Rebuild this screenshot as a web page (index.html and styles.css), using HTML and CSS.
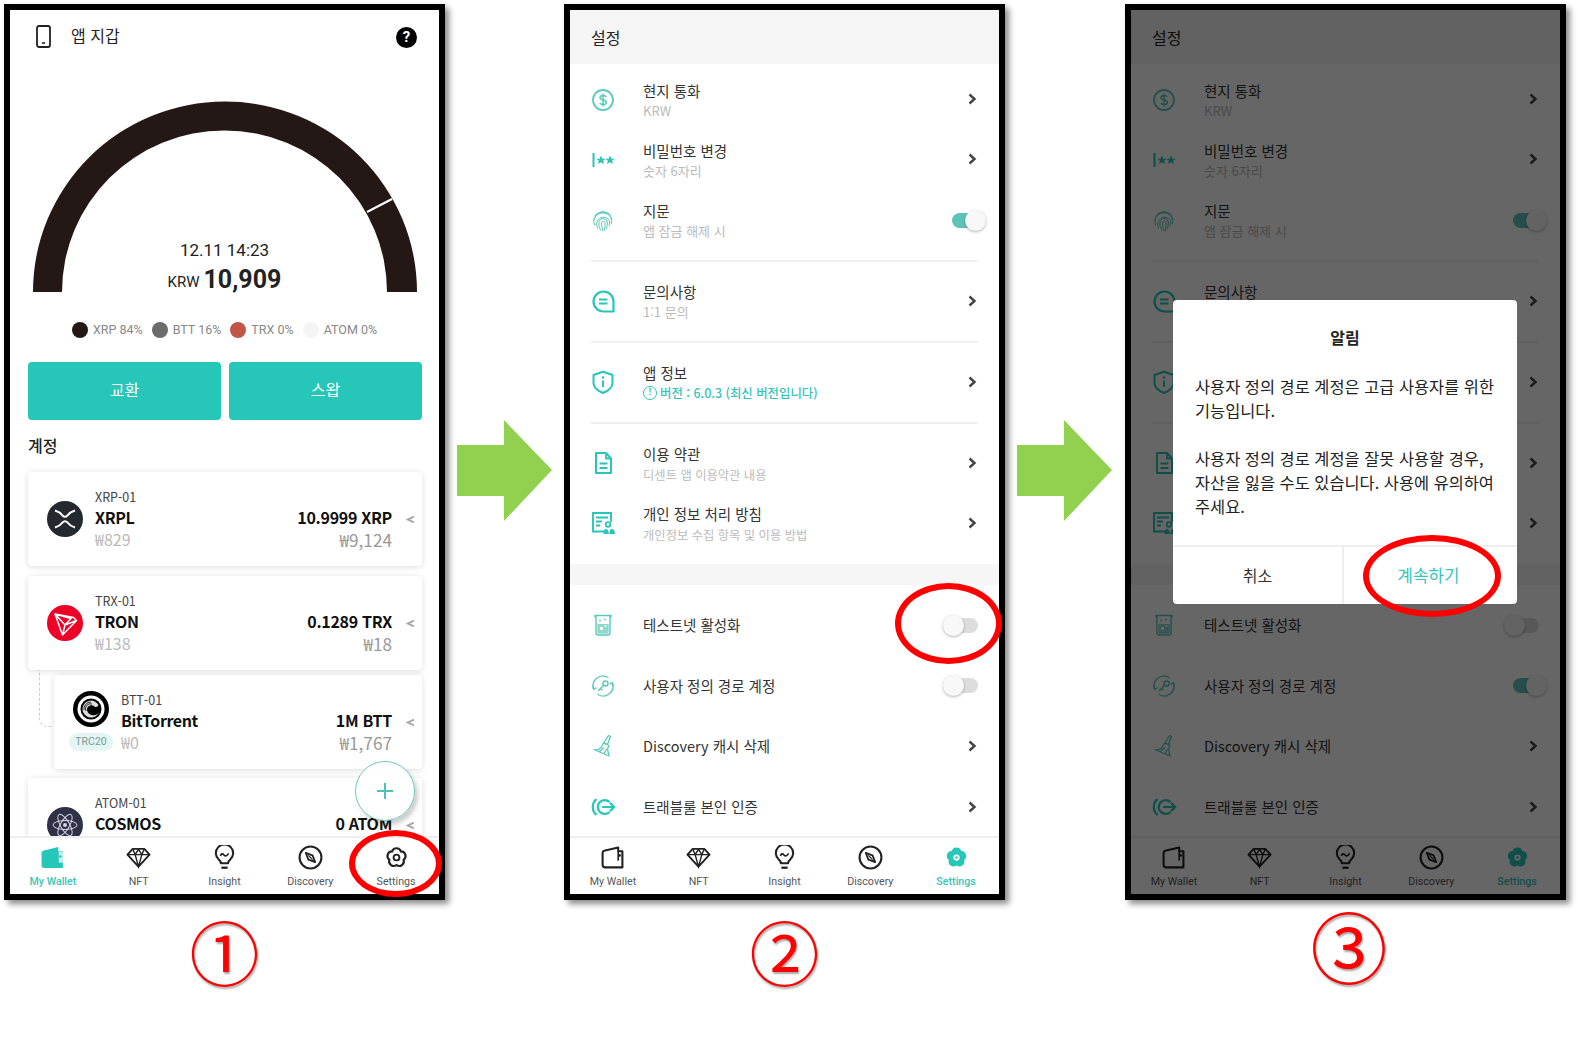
FILE: index.html
```html
<!doctype html>
<html lang="ko">
<head>
<meta charset="utf-8">
<title>앱 지갑 설정</title>
<link rel="stylesheet" href="styles.css">
</head>
<body>

<svg class="defs">
	<symbol id="i-phone" viewBox="0 0 15 23"><rect x="1" y="1" width="13" height="21" rx="2" fill="none" stroke="currentColor" stroke-width="1.8"/><path d="M6 18h3" stroke="currentColor" stroke-width="1.6"/></symbol>
	<symbol id="i-wallet" viewBox="0 0 24 24"><path d="M2.5 7.5Q2.5 6 4 5.600L17.500 2.500V6H21.500V21.500H5Q2.500 21.500 2.500 19Z" fill="none" stroke="currentColor" stroke-width="2" stroke-linejoin="round"/><path d="M17.500 6V15" stroke="currentColor" stroke-width="1.600"/><circle cx="18.800" cy="10" r="1.300" fill="currentColor"/></symbol>
	<symbol id="i-wallet-on" viewBox="0 0 24 24"><path d="M1.500 7.500Q1.500 6 3 5.600L17.500 2V6H22V22H4Q1.500 22 1.500 19.500Z" fill="currentColor"/><path d="M18 6.500H22V17H18Z" fill="#fff" opacity=".75"/><circle cx="19.500" cy="11" r="1.200" fill="currentColor"/></symbol>
	<symbol id="i-gem" viewBox="0 0 26 22"><path d="M7 2H19L24.500 8L13 20.500L1.500 8Z" fill="none" stroke="currentColor" stroke-width="2" stroke-linejoin="round"/><path d="M1.500 8H24.500M7 2L9.500 8L13 20.500L16.500 8L19 2M9.500 8L13 2.500L16.500 8" fill="none" stroke="currentColor" stroke-width="1.500"/></symbol>
	<symbol id="i-bulb" viewBox="0 0 24 24"><path d="M8.500 17.500Q8.500 15.500 6.500 14A8.300 8.300 0 1 1 17.500 14Q15.500 15.500 15.500 17.500Z" fill="none" stroke="currentColor" stroke-width="2" stroke-linejoin="round"/><path d="M9 21.800H15" stroke="currentColor" stroke-width="2.200"/><path d="M8 10.500Q9.500 7 11.500 9.500T16 8" fill="none" stroke="currentColor" stroke-width="1.600"/></symbol>
	<symbol id="i-compass" viewBox="0 0 24 24"><circle cx="12" cy="12" r="10.500" fill="none" stroke="currentColor" stroke-width="2"/><path d="M7.500 7.500L14 10L16.500 16.500L10 14Z" fill="none" stroke="currentColor" stroke-width="1.700" stroke-linejoin="round"/><path d="M10 10L14 14" stroke="currentColor" stroke-width="1.200"/></symbol>
	<symbol id="i-gear" viewBox="0 0 24 24"><path d="M8.470 7.150A3.700 3.700 0 0 1 15.530 7.150A3.700 3.700 0 0 1 17.710 13.850A3.700 3.700 0 0 1 12 18A3.700 3.700 0 0 1 6.290 13.850A3.700 3.700 0 0 1 8.470 7.150Z" fill="none" stroke="currentColor" stroke-width="1.700" transform="translate(12 12) scale(1.200) translate(-12 -12)"/><circle cx="12" cy="12" r="2.800" fill="none" stroke="currentColor" stroke-width="1.800"/></symbol>
	<symbol id="i-gear-on" viewBox="0 0 24 24"><path d="M8.470 7.150A3.700 3.700 0 0 1 15.530 7.150A3.700 3.700 0 0 1 17.710 13.850A3.700 3.700 0 0 1 12 18A3.700 3.700 0 0 1 6.290 13.850A3.700 3.700 0 0 1 8.470 7.150Z" fill="currentColor" transform="translate(12 12) scale(1.280) translate(-12 -12)"/><circle cx="12" cy="12" r="3" fill="#fff"/><circle cx="12" cy="12" r="1.200" fill="currentColor"/></symbol>
	<symbol id="i-dollar" viewBox="0 0 24 24"><circle cx="12" cy="12" r="10" fill="none" stroke="currentColor" stroke-width="1.800"/><path d="M15.300 9C14.500 7 9 6.800 9 9.600C9 12.800 15.400 11.400 15.400 14.500C15.400 17.300 9.700 17.200 8.800 15M12 5.500V18.500" fill="none" stroke="currentColor" stroke-width="1.500"/></symbol>
	<symbol id="i-stars" viewBox="0 0 24 24"><rect x="1.500" y="5" width="2" height="14" fill="currentColor"/><path d="M10 7.500L11.400 10.700H14.700L12.100 12.800L13 16L10 14.200L7 16L7.900 12.800L5.300 10.700H8.600Z" fill="currentColor"/><path d="M19 7.500L20.400 10.700H23.700L21.100 12.800L22 16L19 14.200L16 16L16.900 12.800L14.300 10.700H17.600Z" fill="currentColor"/></symbol>
	<symbol id="i-finger" viewBox="0 0 24 24"><g fill="none" stroke="currentColor" stroke-width="1" stroke-linecap="round"><path d="M4 6.500A10 10 0 0 1 20 6.500"/><path d="M2.800 11A9.500 9.500 0 0 1 21 10.500"/><path d="M3.500 16A8.800 8.800 0 0 1 19.800 8.500Q21 11 20.500 14.500"/><path d="M6.500 19A6.800 6.800 0 0 1 18.500 11.500Q18.800 14 18.200 16.500"/><path d="M9.500 21Q7 17 8 12.500A4.300 4.300 0 0 1 16.300 13Q16.500 16.500 15.500 19.500"/><path d="M12 22Q10 17 10.500 13.500A1.800 1.800 0 0 1 14 14Q14.200 17.500 13.500 21.500"/></g></symbol>
	<symbol id="i-chat" viewBox="0 0 24 24"><path d="M12.500 2.500A10 10 0 1 0 12.500 22.500H22.500V12.500A10 10 0 0 0 12.500 2.500Z" fill="none" stroke="currentColor" stroke-width="2.200" stroke-linejoin="round"/><path d="M8 10.500H16.500M8 14.500H16.500" stroke="currentColor" stroke-width="2"/></symbol>
	<symbol id="i-shield" viewBox="0 0 24 24"><path d="M12 1.800L21.500 5V13Q21.500 19 12 23Q2.500 19 2.500 13V5Z" fill="none" stroke="currentColor" stroke-width="2" stroke-linejoin="round"/><path d="M12 10.500V17" stroke="currentColor" stroke-width="2"/><circle cx="12" cy="7.500" r="1.200" fill="currentColor"/></symbol>
	<symbol id="i-doc" viewBox="0 0 24 24"><path d="M5 2H15L20 7.500V22H5Z" fill="none" stroke="currentColor" stroke-width="2" stroke-linejoin="round"/><path d="M15 2V7.500H20M8.500 12.500H16.500M8.500 17H16.500" fill="none" stroke="currentColor" stroke-width="1.800"/></symbol>
	<symbol id="i-privacy" viewBox="0 0 24 24"><path d="M13 20.500H2V2H20V11" fill="none" stroke="currentColor" stroke-width="1.900"/><path d="M5 6.500H17M5 10.500H11M5 14.500H9" stroke="currentColor" stroke-width="1.900"/><circle cx="17" cy="13.500" r="2.300" fill="none" stroke="currentColor" stroke-width="1.700"/><path d="M12.500 23Q12.500 18 15 18T17.800 23ZM18.300 23Q18.300 18 21 18T24 23Z" fill="currentColor"/></symbol>
	<symbol id="i-beaker" viewBox="0 0 24 24"><path d="M4 2.500H20V3.800H19V20Q19 22 17 22H7Q5 22 5 20V3.800H4Z" fill="none" stroke="currentColor" stroke-width="1.400"/><path d="M6.300 11H17.700V19.500Q17.700 20.700 16.500 20.700H7.500Q6.300 20.700 6.300 19.500Z" fill="currentColor" opacity=".7"/><rect x="9" y="14" width="3" height="3" fill="#fff"/><circle cx="14.500" cy="13" r="1" fill="#fff"/><circle cx="9" cy="7.500" r=".9" fill="currentColor"/><circle cx="14" cy="6.500" r=".9" fill="currentColor"/></symbol>
	<symbol id="i-keyturn" viewBox="0 0 24 24"><g fill="none" stroke="currentColor" stroke-width="1.400" stroke-linecap="round"><path d="M2.600 15A9.800 9.800 0 0 1 17 3.500"/><path d="M21.400 9A9.800 9.800 0 0 1 7 20.500"/><path d="M2 12.500L2.700 15.200L5 14M22 11.500L21.300 8.800L19 10"/><circle cx="14.500" cy="9.500" r="2.500"/><path d="M12.700 11.300L7.500 16.500M9.500 14.500L11 16"/></g></symbol>
	<symbol id="i-broom" viewBox="0 0 24 24"><g fill="none" stroke="currentColor" stroke-width="1.300" stroke-linejoin="round"><path d="M17.500 1.500L19.500 2.500L16.500 10.500L13 9Z"/><path d="M12.500 9L18 11.500L16.500 15L18 22L3 15.500Q7 17 10 13.500Z"/><path d="M8 18L13 13.500M13 20L15.500 15"/></g></symbol>
	<symbol id="i-exit" viewBox="0 0 28 20"><g fill="none" stroke="currentColor" stroke-width="2.400"><path d="M7 1.500A11 11 0 0 0 7 18.500"/><path d="M21 4.500A7.500 7.500 0 1 0 21 15.500"/><path d="M13 10H26M21.500 5.500L26 10L21.500 14.500"/></g></symbol>
	<symbol id="i-chev" viewBox="0 0 10 12"><path d="M2.500 1.500L7.500 6L2.500 10.500" fill="none" stroke="currentColor" stroke-width="2.400"/></symbol>
	<symbol id="i-back" viewBox="0 0 8 8"><path d="M7 1.500L1.500 4L7 6.500" fill="none" stroke="currentColor" stroke-width="1.800"/></symbol>
</svg>

<div class="board">

	<section class="step">
		<div class="phone">
			<div class="screen">
				<header class="wallet-head">
					<svg class="head-icon"><use href="#i-phone"/></svg>
					<span class="head-title">앱 지갑</span>
					<span class="help">?</span>
				</header>
				<div class="wallet-body">
					<div class="gauge">
						<svg class="gauge-arc" viewBox="0 0 429 240">
							<path d="M23 230A192 190.500 0 0 1 407 230H377A162.500 161.500 0 0 0 52 230Z" fill="#231815"/>
							<path d="M357 150L382 137" stroke="#fff" stroke-width="2"/>
						</svg>
						<div class="gauge-text">
							<div class="gauge-time">12.11 14:23</div>
							<div class="gauge-sum"><span class="gauge-cur">KRW</span> <b>10,909</b></div>
						</div>
					</div>
					<div class="legend">
						<span class="legend-item"><i class="dot dot-xrp"></i>XRP 84%</span>
						<span class="legend-item"><i class="dot dot-btt"></i>BTT 16%</span>
						<span class="legend-item"><i class="dot dot-trx"></i>TRX 0%</span>
						<span class="legend-item"><i class="dot dot-atom"></i>ATOM 0%</span>
					</div>
					<div class="actions">
						<button class="action">교환</button>
						<button class="action">스왑</button>
					</div>
					<h2 class="accounts-title">계정</h2>

					<div class="card">
						<div class="coin-col">
							<svg class="coin" viewBox="0 0 36 36"><circle cx="18" cy="18" r="18" fill="#23292f"/><path d="M8 9.500Q13 11 15.500 14.500Q18 17 20.500 14.500Q23 11 28 9.500M8 26.500Q13 25 15.500 21.500Q18 19 20.500 21.500Q23 25 28 26.500" fill="none" stroke="#fff" stroke-width="2"/></svg>
						</div>
						<div class="card-main"><div class="card-id">XRP-01</div><div class="card-name">XRPL</div><div class="card-rate">₩829</div></div>
						<div class="card-side"><div class="card-amount">10.9999 XRP</div><div class="card-value">₩9,124</div></div>
						<svg class="card-back"><use href="#i-back"/></svg>
					</div>

					<div class="card">
						<div class="coin-col">
							<svg class="coin" viewBox="0 0 36 36"><circle cx="18" cy="18" r="18" fill="#ef0027"/><path d="M8 9L26.500 12.500L29.500 15.500L15.500 30ZM8 9L18 20L15.500 30M8 9L24 13.500L18 20L29.500 15.500" fill="none" stroke="#fff" stroke-width="1.500" stroke-linejoin="round"/></svg>
						</div>
						<div class="card-main"><div class="card-id">TRX-01</div><div class="card-name">TRON</div><div class="card-rate">₩138</div></div>
						<div class="card-side"><div class="card-amount">0.1289 TRX</div><div class="card-value">₩18</div></div>
						<svg class="card-back"><use href="#i-back"/></svg>
					</div>

					<div class="card card-sub">
						<span class="card-link"></span>
						<div class="coin-col">
							<svg class="coin" viewBox="0 0 36 36"><circle cx="18" cy="18" r="18" fill="#000"/><circle cx="18" cy="18" r="13.500" fill="#fff"/><circle cx="18" cy="18" r="10.500" fill="#000"/><path d="M25.500 14A8.500 8.500 0 1 0 26 21A6.500 6.500 0 0 1 14 19A4.500 4.500 0 0 1 22 16A3 3 0 0 0 25.500 14Z" fill="#ddd"/><path d="M11 19A7 7 0 0 1 18 11" fill="none" stroke="#000" stroke-width=".8"/><path d="M13 20A5 5 0 0 1 19 13" fill="none" stroke="#000" stroke-width=".8"/></svg>
							<span class="pill">TRC20</span>
						</div>
						<div class="card-main"><div class="card-id">BTT-01</div><div class="card-name">BitTorrent</div><div class="card-rate">₩0</div></div>
						<div class="card-side"><div class="card-amount">1M BTT</div><div class="card-value">₩1,767</div></div>
						<svg class="card-back"><use href="#i-back"/></svg>
					</div>

					<div class="card card-after">
						<div class="coin-col">
							<svg class="coin" viewBox="0 0 36 36"><circle cx="18" cy="18" r="18" fill="#2e3148"/><g fill="none" stroke="#d5d6e2" stroke-width="1"><ellipse cx="18" cy="18" rx="12" ry="4.500"/><ellipse cx="18" cy="18" rx="12" ry="4.500" transform="rotate(60 18 18)"/><ellipse cx="18" cy="18" rx="12" ry="4.500" transform="rotate(120 18 18)"/></g><circle cx="18" cy="18" r="2" fill="#d5d6e2"/></svg>
						</div>
						<div class="card-main"><div class="card-id">ATOM-01</div><div class="card-name">COSMOS</div></div>
						<div class="card-side"><div class="card-amount">0 ATOM</div></div>
						<svg class="card-back"><use href="#i-back"/></svg>
					</div>
				</div>
				<span class="fab"></span>
				<nav class="tabs">
					<a class="tab tab-on"><svg class="tab-icon"><use href="#i-wallet-on"/></svg>My Wallet</a>
					<a class="tab"><svg class="tab-icon"><use href="#i-gem"/></svg>NFT</a>
					<a class="tab"><svg class="tab-icon"><use href="#i-bulb"/></svg>Insight</a>
					<a class="tab"><svg class="tab-icon"><use href="#i-compass"/></svg>Discovery</a>
					<a class="tab"><svg class="tab-icon"><use href="#i-gear"/></svg>Settings</a>
				</nav>
			</div>
			<span class="ring ring-one"></span>
		</div>
		<div class="num">①</div>
	</section>

	<div class="arrow-col"><span class="arrow"></span></div>

	<section class="step">
		<div class="phone">
			<div class="screen">
				<header class="set-head">설정</header>
				<div class="set-body">
					<div class="group group-a">
						<div class="row"><svg class="row-icon soft"><use href="#i-dollar"/></svg><div class="row-text"><div class="row-title">현지 통화</div><div class="row-sub">KRW</div></div><svg class="chev"><use href="#i-chev"/></svg></div>
						<div class="row"><svg class="row-icon"><use href="#i-stars"/></svg><div class="row-text"><div class="row-title">비밀번호 변경</div><div class="row-sub">숫자 6자리</div></div><svg class="chev"><use href="#i-chev"/></svg></div>
						<div class="row"><svg class="row-icon soft"><use href="#i-finger"/></svg><div class="row-text"><div class="row-title">지문</div><div class="row-sub">앱 잠금 해제 시</div></div><span class="toggle toggle-on"><i></i></span></div>
					</div>
					<div class="group">
						<div class="row"><svg class="row-icon"><use href="#i-chat"/></svg><div class="row-text"><div class="row-title">문의사항</div><div class="row-sub">1:1 문의</div></div><svg class="chev"><use href="#i-chev"/></svg></div>
					</div>
					<div class="group">
						<div class="row"><svg class="row-icon"><use href="#i-shield"/></svg><div class="row-text"><div class="row-title">앱 정보</div><div class="row-sub row-version"><i class="ver-mark">!</i>버전 : 6.0.3 (최신 버전입니다)</div></div><svg class="chev"><use href="#i-chev"/></svg></div>
					</div>
					<div class="group group-end">
						<div class="row"><svg class="row-icon"><use href="#i-doc"/></svg><div class="row-text"><div class="row-title">이용 약관</div><div class="row-sub row-sub-long">디센트 앱 이용약관 내용</div></div><svg class="chev"><use href="#i-chev"/></svg></div>
						<div class="row"><svg class="row-icon"><use href="#i-privacy"/></svg><div class="row-text"><div class="row-title">개인 정보 처리 방침</div><div class="row-sub row-sub-long">개인정보 수집 항목 및 이용 방법</div></div><svg class="chev"><use href="#i-chev"/></svg></div>
					</div>
					<div class="band"></div>
					<div class="group-last">
						<div class="row"><svg class="row-icon soft"><use href="#i-beaker"/></svg><div class="row-text one"><div class="row-title">테스트넷 활성화</div></div><span class="toggle"><i></i></span></div>
						<div class="row"><svg class="row-icon soft"><use href="#i-keyturn"/></svg><div class="row-text one"><div class="row-title">사용자 정의 경로 계정</div></div><span class="toggle"><i></i></span></div>
						<div class="row"><svg class="row-icon soft"><use href="#i-broom"/></svg><div class="row-text one"><div class="row-title">Discovery 캐시 삭제</div></div><svg class="chev"><use href="#i-chev"/></svg></div>
						<div class="row"><svg class="row-icon row-icon-wide"><use href="#i-exit"/></svg><div class="row-text one"><div class="row-title">트래블룰 본인 인증</div></div><svg class="chev"><use href="#i-chev"/></svg></div>
					</div>
				</div>
				<nav class="tabs">
					<a class="tab"><svg class="tab-icon"><use href="#i-wallet"/></svg>My Wallet</a>
					<a class="tab"><svg class="tab-icon"><use href="#i-gem"/></svg>NFT</a>
					<a class="tab"><svg class="tab-icon"><use href="#i-bulb"/></svg>Insight</a>
					<a class="tab"><svg class="tab-icon"><use href="#i-compass"/></svg>Discovery</a>
					<a class="tab tab-on"><svg class="tab-icon"><use href="#i-gear-on"/></svg>Settings</a>
				</nav>
			</div>
			<span class="ring ring-two"></span>
		</div>
		<div class="num">②</div>
	</section>

	<div class="arrow-col"><span class="arrow"></span></div>

	<section class="step">
		<div class="phone">
			<div class="screen">
				<header class="set-head">설정</header>
				<div class="set-body">
					<div class="group group-a">
						<div class="row"><svg class="row-icon soft"><use href="#i-dollar"/></svg><div class="row-text"><div class="row-title">현지 통화</div><div class="row-sub">KRW</div></div><svg class="chev"><use href="#i-chev"/></svg></div>
						<div class="row"><svg class="row-icon"><use href="#i-stars"/></svg><div class="row-text"><div class="row-title">비밀번호 변경</div><div class="row-sub">숫자 6자리</div></div><svg class="chev"><use href="#i-chev"/></svg></div>
						<div class="row"><svg class="row-icon soft"><use href="#i-finger"/></svg><div class="row-text"><div class="row-title">지문</div><div class="row-sub">앱 잠금 해제 시</div></div><span class="toggle toggle-on"><i></i></span></div>
					</div>
					<div class="group">
						<div class="row"><svg class="row-icon"><use href="#i-chat"/></svg><div class="row-text"><div class="row-title">문의사항</div><div class="row-sub">1:1 문의</div></div><svg class="chev"><use href="#i-chev"/></svg></div>
					</div>
					<div class="group">
						<div class="row"><svg class="row-icon"><use href="#i-shield"/></svg><div class="row-text"><div class="row-title">앱 정보</div><div class="row-sub row-version"><i class="ver-mark">!</i>버전 : 6.0.3 (최신 버전입니다)</div></div><svg class="chev"><use href="#i-chev"/></svg></div>
					</div>
					<div class="group group-end">
						<div class="row"><svg class="row-icon"><use href="#i-doc"/></svg><div class="row-text"><div class="row-title">이용 약관</div><div class="row-sub row-sub-long">디센트 앱 이용약관 내용</div></div><svg class="chev"><use href="#i-chev"/></svg></div>
						<div class="row"><svg class="row-icon"><use href="#i-privacy"/></svg><div class="row-text"><div class="row-title">개인 정보 처리 방침</div><div class="row-sub row-sub-long">개인정보 수집 항목 및 이용 방법</div></div><svg class="chev"><use href="#i-chev"/></svg></div>
					</div>
					<div class="band"></div>
					<div class="group-last">
						<div class="row"><svg class="row-icon soft"><use href="#i-beaker"/></svg><div class="row-text one"><div class="row-title">테스트넷 활성화</div></div><span class="toggle"><i></i></span></div>
						<div class="row"><svg class="row-icon soft"><use href="#i-keyturn"/></svg><div class="row-text one"><div class="row-title">사용자 정의 경로 계정</div></div><span class="toggle toggle-on"><i></i></span></div>
						<div class="row"><svg class="row-icon soft"><use href="#i-broom"/></svg><div class="row-text one"><div class="row-title">Discovery 캐시 삭제</div></div><svg class="chev"><use href="#i-chev"/></svg></div>
						<div class="row"><svg class="row-icon row-icon-wide"><use href="#i-exit"/></svg><div class="row-text one"><div class="row-title">트래블룰 본인 인증</div></div><svg class="chev"><use href="#i-chev"/></svg></div>
					</div>
				</div>
				<nav class="tabs">
					<a class="tab"><svg class="tab-icon"><use href="#i-wallet"/></svg>My Wallet</a>
					<a class="tab"><svg class="tab-icon"><use href="#i-gem"/></svg>NFT</a>
					<a class="tab"><svg class="tab-icon"><use href="#i-bulb"/></svg>Insight</a>
					<a class="tab"><svg class="tab-icon"><use href="#i-compass"/></svg>Discovery</a>
					<a class="tab tab-on"><svg class="tab-icon"><use href="#i-gear-on"/></svg>Settings</a>
				</nav>
				<div class="dim">
					<div class="dialog">
						<h3 class="dialog-title">알림</h3>
						<p class="dialog-text">사용자 정의 경로 계정은 고급 사용자를 위한<br>기능입니다.<br><br>사용자 정의 경로 계정을 잘못 사용할 경우,<br>자산을 잃을 수도 있습니다. 사용에 유의하여<br>주세요.</p>
						<div class="dialog-btns">
							<span class="dialog-btn">취소</span>
							<span class="dialog-btn dialog-ok">계속하기</span>
						</div>
					</div>
				</div>
			</div>
			<span class="ring ring-three"></span>
		</div>
		<div class="num num-last">③</div>
	</section>

</div>

</body>
</html>
```

FILE: styles.css
```css
*{ margin:0; padding:0; box-sizing:border-box; }
body{ background:#fff; color:#222; font-family:"Noto Sans CJK KR","Noto Sans",sans-serif; }
.defs{ display:none; }

.board{ display:grid; grid-template-columns:441px 119px 441px 120px 441px; padding:4px 0 0 4px; }
.step{ display:flex; flex-direction:column; }

/* phone frame */
.phone{ position:relative; height:896px; border:6px solid #000; box-shadow:4px 4px 6px rgba(0,0,0,.45); }
.screen{ position:relative; height:100%; display:flex; flex-direction:column; overflow:hidden; background:#fff; }
.ring{ position:absolute; border:6px solid #f00; border-radius:50%; z-index:5; }
.ring-one{ left:339px; top:820px; width:93px; height:67px; }
.ring-two{ left:325px; top:573px; width:107px; height:81px; }
.ring-three{ left:232px; top:525px; width:138px; height:82px; }

.num{ margin-top:5px; text-align:center; font-size:70px; line-height:92px; color:#f00; text-shadow:1px 2px 2px rgba(0,0,0,.35); }
.num-last{ margin:-1px 0 0 7px; font-size:77px; }

.arrow-col{ padding:416px 0 0 12px; }
.arrow{ display:block; width:95px; height:101px; background:#92d050; clip-path:polygon(0 25px,47px 25px,47px 0,95px 50px,47px 101px,47px 76px,0 76px); }

/* wallet page */
.wallet-head{ display:flex; align-items:center; height:52px; padding:0 22px 0 26px; }
.head-icon{ width:15px; height:23px; color:#222; }
.head-title{ margin:0 0 2px 20px; font-size:16px; flex:1; }
.help{ width:21px; height:21px; margin-top:2px; border-radius:50%; background:#000; color:#fff; font:700 15px/21px Roboto,sans-serif; text-align:center; }
.wallet-body{ flex:1; overflow:hidden; }

.gauge{ position:relative; height:240px; }
.gauge-arc{ display:block; width:429px; height:240px; }
.gauge-text{ position:absolute; left:0; right:0; top:176px; text-align:center; font-family:Roboto,sans-serif; color:#222; }
.gauge-time{ font-size:17px; line-height:24px; }
.gauge-sum{ line-height:36px; }
.gauge-cur{ position:relative; top:-1px; font-size:15px; }
.gauge-sum b{ font-size:25px; font-weight:700; }

.legend{ display:flex; justify-content:center; gap:9px; margin-top:20px; height:16px; font:12.500px/16px Roboto,sans-serif; color:#888; }
.legend-item{ display:flex; align-items:center; gap:5px; }
.dot{ width:16px; height:16px; border-radius:50%; }
.dot-xrp{ background:#231815; }
.dot-btt{ background:#6b6b6b; }
.dot-trx{ background:#c25545; }
.dot-atom{ background:#f5f5f5; }

.actions{ display:flex; gap:8px; margin:24px 17px 0 18px; }
.action{ flex:1; height:58px; padding-bottom:5px; border:0; border-radius:4px; background:#26c6b8; color:#fff; font:400 16px "Noto Sans CJK KR",sans-serif; }
.accounts-title{ margin:13px 0 15px 18px; font-size:16px; line-height:24px; font-weight:500; }

.card{ position:relative; display:flex; height:94px; margin:0 17px 10px 18px; padding-right:7px; background:#fff; border-radius:4px; box-shadow:0 1px 6px rgba(0,0,0,.14); }
.card-sub{ margin:-5px 17px 9px 44px; }
.card-after{ margin-bottom:0; }
.card-link{ position:absolute; left:-15px; top:-5px; width:13px; height:57px; border-left:1px dashed #ccc; border-bottom:1px dashed #ccc; border-bottom-left-radius:8px; }
.coin-col{ width:67px; padding:29px 0 0 19px; flex-shrink:0; }
.card-sub .coin-col{ padding-top:16px; }
.coin{ display:block; width:36px; height:36px; }
.pill{ display:block; width:44px; height:18px; margin:6px 0 0 -4px; border-radius:9px; background:#e3f6f3; color:#7a9a96; font:10.500px/18px Roboto,sans-serif; text-align:center; }
.card-main{ flex:1; padding-top:15px; }
.card-id{ font-size:12.500px; line-height:20px; color:#444; }
.card-name{ font-size:16px; line-height:20px; font-weight:700; letter-spacing:-.4px; color:#111; }
.card-rate{ margin-top:1px; font-size:16px; line-height:22px; color:#bbb; }
.card-side{ padding-top:35px; text-align:right; }
.card-amount{ font-size:16px; line-height:20px; font-weight:700; letter-spacing:-.3px; color:#111; }
.card-value{ margin-top:2px; font-size:17.200px; line-height:22px; color:#999; }
.card-back{ width:9px; height:9px; margin:43px 0 0 14px; color:#aaa; }

.fab{ position:absolute; right:24px; bottom:73px; width:60px; height:60px; border:1px solid #6ec9be; border-radius:50%; background:rgba(255,255,255,.93); box-shadow:3px 4px 4px rgba(0,0,0,.2); }
.fab:before,.fab:after{ content:""; position:absolute; background:#4fc0b4; }
.fab:before{ left:21px; top:28px; width:16px; height:2px; }
.fab:after{ left:28px; top:21px; width:2px; height:16px; }

/* bottom tabs */
.tabs{ display:flex; height:58px; flex-shrink:0; background:#fff; border-top:2px solid #eee; }
.tab{ flex:1; display:flex; flex-direction:column; align-items:center; padding-top:7px; font:10.700px/16px Roboto,sans-serif; color:#555; }
.tab-icon{ width:25px; height:25px; margin-bottom:4px; color:#222; }
.tab-on{ color:#3cc4b6; font-weight:500; }
.tab-on .tab-icon{ color:#26c6b8; }

/* settings page */
.set-head{ height:54px; flex-shrink:0; padding-left:21px; background:#f5f5f5; font-size:16px; line-height:54px; }
.set-body{ flex:1; overflow:hidden; }
.group{ margin:0 21px; padding:8px 0 11px; border-bottom:2px solid #f0f0f0; }
.group-a{ padding-top:5px; }
.group-end{ padding-bottom:12px; border-bottom:0; }
.group-last{ padding:10px 13px 0 21px; }
.band{ height:21px; background:#f6f6f6; }
.row{ display:flex; align-items:center; height:60px; }
.group .row{ margin-right:-8px; }
.group-last .row{ height:60.500px; }
.group + .group .chev,.group .row-icon{ margin-top:2px; }
.group-a .toggle{ margin-top:3px; }
.group-a .row:last-child .row-icon{ margin-top:3px; }
.row-icon{ width:24px; height:24px; margin-right:28px; flex-shrink:0; color:#26c6b8; }
.row-icon.soft{ color:#5cc9bc; }
.row-icon.row-icon-wide{ width:26px; margin:0 27px 0 -1px; }
.row-text{ flex:1; margin-top:4px; }
.row-text.one{ margin-top:0; }
.row-title{ font-size:14.500px; line-height:20px; color:#333; white-space:nowrap; }
.row-sub{ font-size:13px; line-height:20px; color:#bbb; white-space:nowrap; }
.row-sub-long{ padding-top:1px; font-size:12.300px; }
.row-version{ display:flex; align-items:center; font-size:12.400px; font-weight:500; color:#35c5b7; }
.ver-mark{ width:14px; height:14px; margin-right:3px; border:1.500px solid #35c5b7; border-radius:50%; font:700 9px/11px Roboto,sans-serif; text-align:center; }
.chev{ width:10px; height:12px; margin-right:9px; color:#444; }

.toggle{ position:relative; display:block; width:43px; height:21px; flex-shrink:0; }
.toggle:before{ content:""; position:absolute; left:9px; top:3px; width:26px; height:15px; border-radius:8px; background:#ddd; }
.toggle i{ position:absolute; left:0; top:0; width:21px; height:21px; border-radius:50%; background:#f8f8f8; box-shadow:0 1px 3px rgba(0,0,0,.3); }
.toggle-on:before{ background:#5fc4b8; }
.toggle-on i{ left:22px; }

/* dialog */
.dim{ position:absolute; left:0; top:0; right:0; bottom:0; display:flex; align-items:center; justify-content:center; background:rgba(0,0,0,.6); }
.dialog{ width:344px; margin-left:-1px; padding-top:22px; background:#fff; border-radius:4px; overflow:hidden; }
.dialog-title{ font-size:16px; line-height:30px; font-weight:700; text-align:center; }
.dialog-text{ margin:22px 0 27px; padding-left:22px; font-size:16.400px; line-height:24px; white-space:nowrap; color:#222; }
.dialog-btns{ display:flex; height:59px; border-top:2px solid #eee; }
.dialog-btn{ flex:1; font-size:16px; line-height:57px; text-align:center; color:#333; }
.dialog-ok{ padding-right:4px; border-left:2px solid #eee; font-size:16.800px; color:#35c5b7; }
```
